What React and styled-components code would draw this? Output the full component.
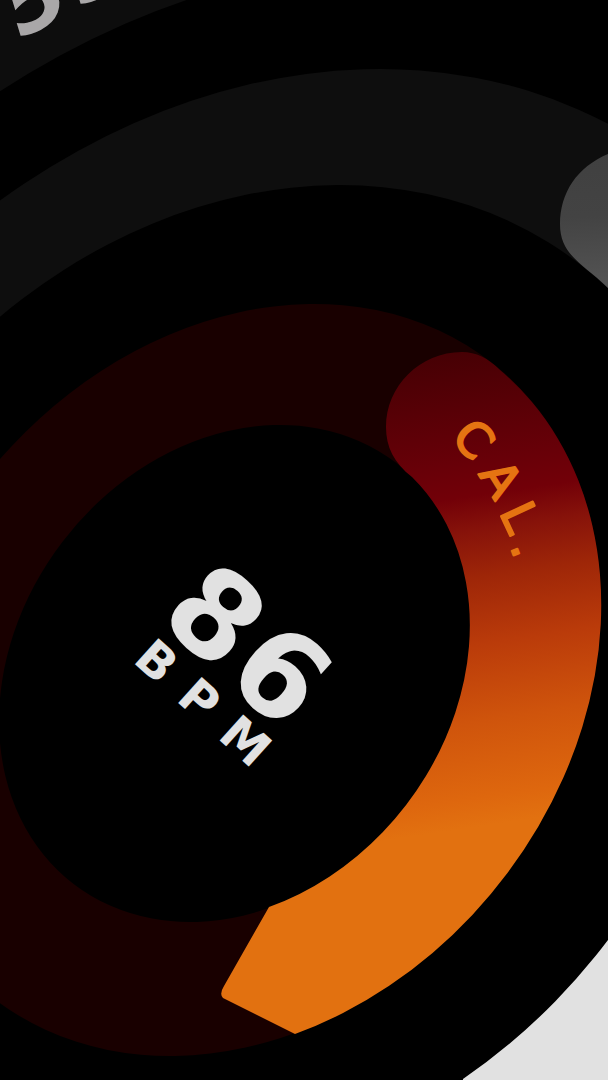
import React from "react";
import styled, { createGlobalStyle } from "styled-components";

const GlobalStyle = createGlobalStyle`
  body {
    margin: 0;
    background: #000;
    overflow: hidden;
  }
`;

const Screen = styled.main`
  display: flex;
  width: 100%;
  height: 100vh;
  background: #000;
`;

const Dial = styled.svg`
  flex: 1;
  min-width: 0;
  height: 100%;
`;

const Label = styled.text`
  font-family: "DejaVu Sans", Verdana, sans-serif;
  font-size: ${(p) => p.$size}px;
  font-weight: ${(p) => p.$weight || 700};
  font-style: ${(p) => (p.$oblique ? "oblique" : "normal")};
  fill: ${(p) => p.$color};
  stroke: ${(p) => p.$edge || "none"};
  stroke-width: ${(p) => p.$edgeWidth || 0}px;
  stroke-linejoin: round;
`;

const rings = [
  { cx: 275, cy: 690, rx: 780, ry: 635, tilt: -52, fill: "#000" },
  { cx: 265, cy: 690, rx: 664, ry: 541, tilt: -52.4, fill: "#0e0e0e" },
  { cx: 255, cy: 680, rx: 527.7, ry: 438.3, tilt: -51.5, fill: "#000" },
  { cx: 242, cy: 680, rx: 403.8, ry: 327.4, tilt: -51.5, fill: "#190000" },
  { cx: 235, cy: 673.5, rx: 265.2, ry: 217.1, tilt: -52.6, fill: "#000" },
];

function Ring({ cx, cy, rx, ry, tilt, fill }) {
  return (
    <ellipse
      cx={cx}
      cy={cy}
      rx={rx}
      ry={ry}
      fill={fill}
      transform={`rotate(${tilt} ${cx} ${cy})`}
    />
  );
}

export default function App() {
  return (
    <Screen>
      <GlobalStyle />
      <Dial
        viewBox="0 0 608 1080"
        preserveAspectRatio="xMidYMid slice"
        role="img"
        aria-label="Activity dial"
      >
        <defs>
          <linearGradient id="heat" gradientUnits="userSpaceOnUse" x1="440" y1="352" x2="510" y2="822">
            <stop offset="0" stopColor="#460004" />
            <stop offset="0.24" stopColor="#680008" />
            <stop offset="0.31" stopColor="#720008" />
            <stop offset="0.38" stopColor="#86120a" />
            <stop offset="0.48" stopColor="#9e2608" />
            <stop offset="0.62" stopColor="#ba3b0a" />
            <stop offset="0.78" stopColor="#cf540c" />
            <stop offset="0.94" stopColor="#de670e" />
            <stop offset="1" stopColor="#e27110" />
          </linearGradient>
          <linearGradient id="silver" gradientUnits="userSpaceOnUse" x1="560" y1="150" x2="600" y2="900">
            <stop offset="0" stopColor="#404040" />
            <stop offset="0.09" stopColor="#434343" />
            <stop offset="0.18" stopColor="#535353" />
            <stop offset="0.9" stopColor="#e1e1e1" />
          </linearGradient>
        </defs>

        <rect width="608" height="1080" fill="#0d0d0d" />
        {rings.map((ring) => (
          <Ring key={ring.rx} {...ring} />
        ))}

        <path
          fill="url(#silver)"
          d="M608 154 C577 167 560 193 560 224 C560 256 584 264 608 288 A527.7 438.3 -51.5 0 1 463 1079 V1200 H700 V130 Z"
        />
        <path
          fill="url(#heat)"
          d="M500 370 A403.8 327.4 -51.5 0 1 295 1034 L223 998 Q219 994 224 986 L269 907 A265.2 217.1 -52.6 0 0 412 477 C394 463 386 447 386 427 C386 386 420 352 462 352 C476 352 488 358 500 370 Z"
        />

        <Label $size={88} $color="#a9a7a8" $oblique x="0 68" transform="translate(21 39) rotate(-28)">
          55
        </Label>

        <Label
          $size={48}
          $weight={400}
          $color="#e57412"
          $edge="#e57412"
          $edgeWidth={2}
          x="450 478 499 510"
          y="438 474 512 546"
          rotate="48 58 65 70"
        >
          CAL.
        </Label>

        <g transform="translate(163 622) rotate(42)">
          <Label $size={120} $color="#e1e1e1" x="-7 81" y="2">
            86
          </Label>
          <Label $size={48} $color="#e1e1e1" x="3 61 117" y="50">
            BPM
          </Label>
        </g>
      </Dial>
    </Screen>
  );
}
